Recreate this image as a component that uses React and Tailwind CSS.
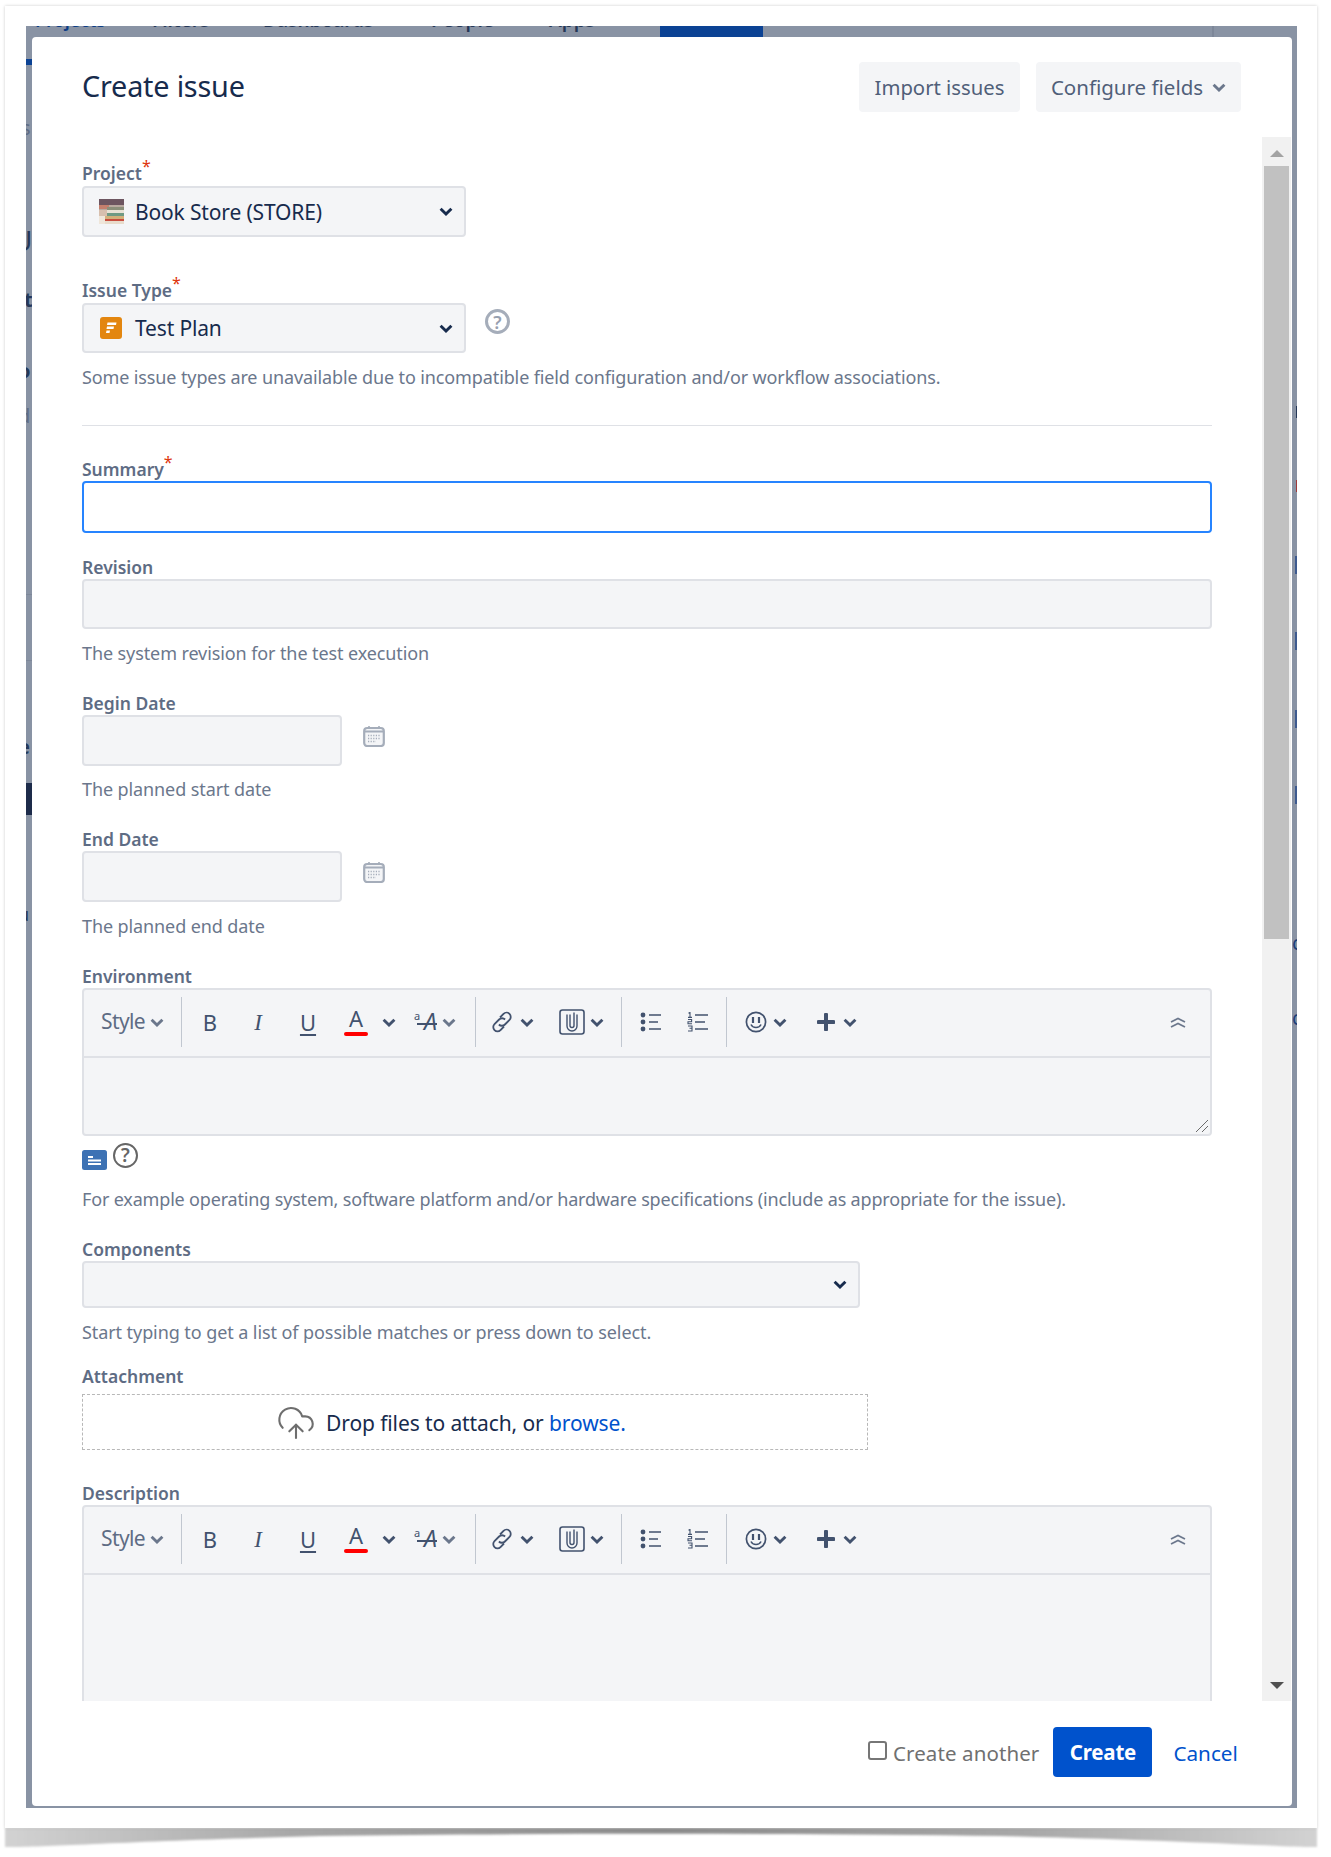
import React from "react";
import { CloudUpload } from "lucide-react";

const FONT = "font-['Noto_Sans','Open_Sans',sans-serif]";

function Chevron({ className = "text-[#6b778c]", w = 14 }) {
  return (
    <svg width={w} height="9" viewBox="0 0 12 8" className={className} fill="none">
      <path d="M1.2 1.5 6 6.2l4.8-4.7" stroke="currentColor" strokeWidth="2.6" />
    </svg>
  );
}

function Label({ children, required, className = "" }) {
  return (
    <div className={`h-[24px] leading-[24px] text-[17.5px] font-semibold text-[#5e6c84] relative ${className}`}>
      {children}
      {required && <span className="text-[#de350b] text-[16px] font-normal leading-none align-top relative top-[-3px]">*</span>}
    </div>
  );
}

function Hint({ children, className = "", tracking = "tracking-[-0.1px]" }) {
  return <div className={`h-[24px] leading-[24px] text-[18px] text-[#6b778c] ${tracking} ${className}`}>{children}</div>;
}

function BookIcon() {
  return (
    <svg width="25" height="25" viewBox="0 0 25 25" className="shrink-0">
      <rect width="25" height="25" fill="#b9a9a0" />
      <rect width="25" height="6" fill="#6d5560" />
      <rect x="0" y="6" width="10" height="4" fill="#c57f6d" />
      <rect x="8" y="8" width="17" height="3" fill="#8b8f7a" />
      <rect x="8" y="11" width="17" height="3" fill="#e8e2d5" />
      <rect x="0" y="11" width="8" height="6" fill="#d7bfae" />
      <rect x="8" y="14" width="17" height="3" fill="#6f9a83" />
      <rect x="6" y="17" width="19" height="3" fill="#d3b07a" />
      <rect x="0" y="17" width="6" height="8" fill="#efe6da" />
      <rect x="6" y="20" width="19" height="2" fill="#c84d3e" />
      <rect x="6" y="22" width="19" height="3" fill="#e8dccc" />
    </svg>
  );
}

function PlanIcon() {
  return (
    <svg width="22" height="22" viewBox="0 0 22 22" className="shrink-0">
      <rect width="22" height="22" rx="3" fill="#e3860f" />
      <path d="M7.5 5.5h9l-.5 2.4H7zM7 9.5h7l-.5 2.4H6.5zM6.5 13.5H10l-.5 2.4H6z" fill="#fff" />
    </svg>
  );
}

function SelectBox({ icon, text, className = "" }) {
  return (
    <div className={`bg-[#f4f5f7] border-2 border-[#dfe1e6] rounded-[4px] flex items-center ${className}`}>
      {icon && <div className="w-[51px] pl-[15px] shrink-0 flex items-center">{icon}</div>}
      {text && <span className="text-[21px] text-[#172b4d] tracking-[-0.15px] relative top-[1px]">{text}</span>}
      <Chevron className="ml-auto mr-[11px] text-[#172b4d]" />
    </div>
  );
}

function InputBox({ className = "" }) {
  return <div className={`bg-[#f4f5f7] border-2 border-[#dfe1e6] rounded-[4px] ${className}`} />;
}

function CalendarIcon() {
  return (
    <svg width="22" height="22" viewBox="0 0 22 22" className="text-[#a5adba]">
      <rect x="1.2" y="3" width="19.6" height="18" rx="3" fill="#f4f5f7" stroke="currentColor" strokeWidth="2.2" />
      <path d="M1 6.5h20" stroke="currentColor" strokeWidth="2" />
      <path d="M6 1v3M16 1v3" stroke="currentColor" strokeWidth="1.6" />
      <path d="M5 10.5h12M5 13.5h12M5 16.5h8" stroke="currentColor" strokeWidth="1.4" strokeDasharray="1.2 1.4" />
    </svg>
  );
}

function DateField({ label, hint, mtLabel, mtHint }) {
  return (
    <div className={mtLabel}>
      <Label>{label}</Label>
      <div className="flex">
        <InputBox className="w-[260px] h-[51px]" />
        <div className="ml-[21px] mt-[10px]"><CalendarIcon /></div>
      </div>
      <Hint className={mtHint}>{hint}</Hint>
    </div>
  );
}

function Sep({ className = "" }) {
  return <div className={`w-[1px] h-[50px] bg-[#c1c7d0] shrink-0 ${className}`} />;
}

function Toolbar() {
  return (
    <div className="h-[68px] pb-[2px] border-b-2 border-[#dfe1e6] flex items-center text-[#42526e] shrink-0">
      <span className="ml-[17px] w-[48px] text-[21px] text-[#5e6c84] tracking-[-0.6px]">Style</span>
      <Chevron className="ml-[1px] text-[#6b778c]" />
      <Sep className="ml-[17px]" />
      <span className="ml-[20px] w-[16px] text-center text-[22px] leading-none">B</span>
      <span className="ml-[32px] w-[16px] text-center text-[23px] leading-none italic font-['Liberation_Serif',serif] underline-offset-0">I</span>
      <span className="ml-[33px] w-[18px] text-center text-[22px] leading-none underline underline-offset-[3px] decoration-[1.5px]">U</span>
      <div className="ml-[26px] w-[26px] flex flex-col items-center relative top-[-2px]">
        <span className="text-[22px] leading-[26px]">A</span>
        <div className="w-[24px] h-[4px] rounded-[2px] bg-[#ff0000] mt-[1px]" />
      </div>
      <Chevron className="ml-[13px]" />
      <div className="ml-[18px] w-[28px] relative h-[28px]">
        <span className="absolute left-0 top-[2px] text-[11px] leading-none">a</span>
        <span className="absolute left-[10px] top-[2px] text-[23px] leading-none italic">A</span>
        <div className="absolute left-[3px] top-[15px] w-[20px] h-[1.5px] bg-[#42526e]" />
      </div>
      <Chevron />
      <Sep className="ml-[19px]" />
      <svg width="26" height="26" viewBox="0 0 26 26" fill="none" stroke="currentColor" strokeWidth="1.8" className="ml-[13px]">
        <path d="M11 8.5l3.5-3.6a4.2 4.2 0 0 1 6 6l-4.6 4.6a4.2 4.2 0 0 1-6 0" />
        <path d="M15 17.5l-3.5 3.6a4.2 4.2 0 0 1-6-6l4.6-4.6a4.2 4.2 0 0 1 6 0" />
      </svg>
      <Chevron className="ml-[5px]" />
      <svg width="26" height="26" viewBox="0 0 26 26" fill="none" stroke="currentColor" className="ml-[25px]">
        <rect x="1" y="1" width="24" height="24" rx="2.5" strokeWidth="1.6" />
        <path d="M8 5.5v11.5a5 5 0 0 0 10 0V5.5" strokeWidth="1.4" />
        <path d="M11 5.5v11a2 2 0 0 0 4 0V3.5" strokeWidth="1.4" />
      </svg>
      <Chevron className="ml-[5px]" />
      <Sep className="ml-[17px]" />
      <svg width="22" height="20" viewBox="0 0 22 20" className="ml-[18px]">
        <circle cx="3" cy="3" r="2.4" fill="currentColor" /><circle cx="3" cy="10" r="2.4" fill="currentColor" /><circle cx="3" cy="17" r="2.4" fill="currentColor" />
        <path d="M9 3h12M9 10h9M9 17h12" stroke="currentColor" strokeWidth="1.7" />
      </svg>
      <svg width="22" height="20" viewBox="0 0 22 20" className="ml-[25px]">
        <path d="M1.5 1.2 3 .4v4.6M1 5.4h4M1 7.5h3.6v2.2H1v2.1h4M1 14h4v2.2H2.5M5 16.2v2.8H1" stroke="currentColor" strokeWidth="1.1" fill="none" />
        <path d="M8 3h13M8 10h10M8 17h13" stroke="currentColor" strokeWidth="1.7" />
      </svg>
      <Sep className="ml-[17px]" />
      <svg width="22" height="22" viewBox="0 0 22 22" fill="none" stroke="currentColor" className="ml-[18px]">
        <circle cx="11" cy="11" r="9.6" strokeWidth="1.7" />
        <path d="M8 6v6M14 6v6" strokeWidth="2.2" />
        <path d="M6 13.5c1 2.3 3 3 5 3s4-.7 5-3" strokeWidth="1.6" />
      </svg>
      <Chevron className="ml-[6px]" />
      <svg width="18" height="18" viewBox="0 0 18 18" className="ml-[30px]">
        <path d="M9 1.5v15M1.5 9h15" stroke="currentColor" strokeWidth="4" strokeLinecap="round" />
      </svg>
      <Chevron className="ml-[8px]" />
      <svg width="16" height="12" viewBox="0 0 16 12" fill="none" stroke="#6b778c" strokeWidth="1.8" className="ml-auto mr-[24px]">
        <path d="M1 6 8 2.5 15 6M1 11l7-3.5 7 3.5" />
      </svg>
    </div>
  );
}

function Shadow() {
  return (
    <svg width="1331" height="30" viewBox="0 0 1331 30" className="absolute left-0 top-[1827px]">
      <defs>
        <linearGradient id="sh" x1="0" x2="1" y1="0" y2="0">
          <stop offset="0" stopColor="#d2d2d2" />
          <stop offset="0.22" stopColor="#a8a8a8" />
          <stop offset="0.5" stopColor="#8b8b8b" />
          <stop offset="0.78" stopColor="#a8a8a8" />
          <stop offset="1" stopColor="#d2d2d2" />
        </linearGradient>
        <filter id="bl" x="-2%" y="-50%" width="104%" height="200%"><feGaussianBlur stdDeviation="1" /></filter>
      </defs>
      <path d="M5 1H1317V20C1300 21 1200 14 1000 9 800 6 520 6 320 9 130 14 30 21 5 20Z" fill="url(#sh)" filter="url(#bl)" />
    </svg>
  );
}

export default function App() {
  return (
    <div className={`relative w-[1331px] h-[1857px] bg-white overflow-hidden pl-[5px] pt-[6px] ${FONT}`}>
      <Shadow />
      <div className="relative w-[1312px] h-[1822px] bg-white pl-[21px] pt-[20px] shadow-[0_0_3px_rgba(0,0,0,0.2)]">
        {/* dimmed page behind the dialog */}
        <div className="relative w-[1271px] h-[1782px] bg-[#8993a4] pl-[6px] pt-[11px] overflow-hidden">
          <div className="absolute left-[9px] top-[-18px] flex text-[19px] leading-[24px] text-[#0c3d86] font-semibold">
            <span className="w-[117px] text-[18px]">Projects</span>
            <span className="w-[111px] text-[#253858]">Filters</span>
            <span className="w-[168px] text-[#253858]">Dashboards</span>
            <span className="w-[118px] text-[#253858]">People</span>
            <span className="text-[#253858]">Apps</span>
          </div>
          <div className="absolute left-[634px] top-0 w-[103px] h-[11px] bg-[#0b4294] overflow-hidden">
            <span className="absolute left-[19px] top-[-19px] text-[19px] leading-[24px] font-semibold text-[#8a9bb8]">Create</span>
          </div>
          <div className="absolute left-[1186px] top-0 w-[2px] h-[11px] bg-[#7d8799]" />
          {/* left edge */}
          <div className="absolute left-0 top-[33px] w-[6px] h-[6px] bg-[#0b4294]" />
          <div className="absolute left-0 top-[757px] w-[6px] h-[32px] bg-[#1d2b4a]" />
          <div className="absolute left-0 top-[568px] w-[6px] h-[1px] bg-[#7d8799]" />
          <div className="absolute left-0 top-[634px] w-[6px] h-[1px] bg-[#7d8799]" />
          <span className="absolute left-[-5px] top-[90px] text-[20px] leading-[24px] text-[#5e6c84]">s</span>
          <span className="absolute left-[-14px] top-[200px] text-[28px] leading-[28px] text-[#253858]">U</span>
          <span className="absolute left-[-2px] top-[262px] text-[20px] leading-[24px] font-bold text-[#253858]">t</span>
          <span className="absolute left-[-8px] top-[333px] text-[20px] leading-[24px] font-bold text-[#253858]">o</span>
          <span className="absolute left-[-8px] top-[378px] text-[20px] leading-[24px] text-[#5e6c84]">d</span>
          <span className="absolute left-[-8px] top-[709px] text-[20px] leading-[24px] font-bold text-[#253858]">e</span>
          <span className="absolute left-[-8px] top-[876px] text-[18px] leading-[24px] text-[#253858]">u</span>
          {/* right edge */}
          <div className="absolute right-0 top-[530px] w-[2px] h-[18px] bg-[#3d5a8f]" />
          <div className="absolute right-0 top-[606px] w-[2px] h-[18px] bg-[#3d5a8f]" />
          <div className="absolute right-0 top-[684px] w-[2px] h-[18px] bg-[#3d5a8f]" />
          <div className="absolute right-0 top-[760px] w-[2px] h-[18px] bg-[#3d5a8f]" />
          <div className="absolute right-0 top-[380px] w-[1px] h-[12px] bg-[#253858]" />
          <div className="absolute right-0 top-[454px] w-[1px] h-[12px] bg-[#a03a3a]" />
          <span className="absolute left-[1266px] top-[905px] text-[20px] leading-[24px] text-[#1d3f7a]">c</span>
          <span className="absolute left-[1266px] top-[980px] text-[20px] leading-[24px] text-[#1d3f7a]">c</span>

          {/* dialog */}
          <div className="relative w-[1260px] h-[1769px] bg-white rounded-[4px] flex flex-col overflow-hidden">
            <div className="h-[100px] shrink-0 flex items-start pl-[50px] pr-[51px]">
              <h1 className="mt-[34px] text-[28.8px] leading-[30px] text-[#172b4d] font-normal tracking-[-0.2px]">Create issue</h1>
              <div className="ml-auto mt-[25px] pt-[1px] h-[50px] w-[161px] flex items-center justify-center rounded-[4px] bg-[#f4f5f7] text-[20.3px] text-[#505f79]">Import issues</div>
              <div className="ml-[16px] mt-[25px] pt-[1px] h-[50px] w-[205px] flex items-center justify-center gap-[9px] rounded-[4px] bg-[#f4f5f7] text-[20.5px] text-[#505f79]">
                Configure fields <Chevron className="text-[#6b778c]" />
              </div>
            </div>

            <div className="flex-1 min-h-0 flex overflow-hidden">
              <div className="flex-1 min-w-0 pl-[50px] overflow-hidden">
                <div className="w-[1130px] pt-[25px]">
                  <Label required className="top-[-1px]">Project</Label>
                  <SelectBox className="w-[384px] h-[51px]" icon={<BookIcon />} text="Book Store (STORE)" />

                  <Label required className="mt-[42px] top-[-1px]">Issue Type</Label>
                  <div className="flex">
                    <SelectBox className="w-[384px] h-[50px]" icon={<div className="pl-[1px]"><PlanIcon /></div>} text="Test Plan" />
                    <div className="ml-[19px] mt-[6px] w-[25px] h-[25px] rounded-full border-[3px] border-[#a5adba] flex items-center justify-center text-[18px] font-semibold text-[#97a0af] leading-none">?</div>
                  </div>
                  <Hint className="mt-[12px]" tracking="tracking-[-0.12px]">Some issue types are unavailable due to incompatible field configuration and/or workflow associations.</Hint>
                  <div className="h-[1px] bg-[#dfe1e6] mt-[36px]" />

                  <Label required className="mt-[31px]">Summary</Label>
                  <div className="h-[52px] border-2 border-[#2684ff] rounded-[4px] bg-white" />

                  <Label className="mt-[22px]">Revision</Label>
                  <InputBox className="h-[50px]" />
                  <Hint className="mt-[12px]">The system revision for the test execution</Hint>

                  <DateField label="Begin Date" hint="The planned start date" mtLabel="mt-[26px]" mtHint="mt-[11px]" />
                  <DateField label="End Date" hint="The planned end date" mtLabel="mt-[26px]" mtHint="mt-[12px]" />

                  <Label className="mt-[26px]">Environment</Label>
                  <div className="relative h-[148px] bg-[#f4f5f7] border-2 border-[#dfe1e6] rounded-[4px] overflow-hidden">
                    <Toolbar />
                    <svg width="14" height="14" viewBox="0 0 14 14" className="absolute right-[1px] bottom-[1px]" stroke="#6b6b6b" strokeWidth="1">
                      <path d="M1 13 13 1M7 13l6-6" />
                    </svg>
                  </div>
                  <div className="flex mt-[7px] h-[27px]">
                    <svg width="25" height="20" viewBox="0 0 25 20" className="mt-[7px]">
                      <rect width="25" height="20" rx="2.5" fill="#3d72b4" />
                      <path d="M6 7h5M6 10.5h13M6 14h13" stroke="#fff" strokeWidth="1.8" />
                    </svg>
                    <div className="ml-[6px] w-[25px] h-[25px] rounded-full border-[2.5px] border-[#666] flex items-center justify-center text-[19px] font-semibold text-[#666] leading-none">?</div>
                  </div>
                  <Hint className="mt-[17px]" tracking="tracking-[-0.17px]">For example operating system, software platform and/or hardware specifications (include as appropriate for the issue).</Hint>

                  <Label className="mt-[26px]">Components</Label>
                  <SelectBox className="w-[778px] h-[47px]" />
                  <Hint className="mt-[12px]" tracking="tracking-[-0.08px]">Start typing to get a list of possible matches or press down to select.</Hint>

                  <Label className="mt-[20px]">Attachment</Label>
                  <div className="mt-[6px] w-[786px] h-[56px] border border-dashed border-[#b8b8b8] flex items-center">
                    <CloudUpload size={40} strokeWidth={1.25} className="ml-[193px] text-[#6e6e6e] relative top-[1px]" />
                    <span className="ml-[10px] text-[21px] text-[#172b4d] tracking-[-0.1px] relative top-[2px]">
                      Drop files to attach, or <span className="text-[#0052cc]">browse.</span>
                    </span>
                  </div>

                  <Label className="mt-[31px]">Description</Label>
                  <div className="relative h-[300px] bg-[#f4f5f7] border-2 border-[#dfe1e6] rounded-[4px] overflow-hidden">
                    <Toolbar />
                  </div>
                </div>
              </div>

              {/* scrollbar */}
              <div className="w-[29px] mr-[1px] bg-[#f1f1f1] shrink-0 flex flex-col items-center">
                <div className="h-[29px] w-full flex items-center justify-center">
                  <div className="w-0 h-0 border-x-[7px] border-x-transparent border-b-[7px] border-b-[#a3a3a3] mt-[3px]" />
                </div>
                <div className="w-[25px] h-[773px] bg-[#c1c1c1]" />
                <div className="mt-auto h-[32px] w-full flex items-start justify-center">
                  <div className="w-0 h-0 border-x-[7px] border-x-transparent border-t-[7px] border-t-[#505050] mt-[13px]" />
                </div>
              </div>
            </div>

            <div className="h-[105px] shrink-0 flex items-start">
              <div className="ml-[836px] mt-[40px] w-[19px] h-[19px] border-2 border-[#767676] rounded-[3px] bg-white" />
              <span className="ml-[6px] mt-[38px] text-[20.5px] leading-[28px] text-[#707070] tracking-[0.1px]">Create another</span>
              <div className="ml-[14px] mt-[26px] pt-[1px] w-[99px] h-[50px] rounded-[4px] bg-[#0052cc] flex items-center justify-center text-[20.5px] font-bold text-white tracking-[-0.2px]">Create</div>
              <span className="ml-[21px] mt-[38px] text-[20.7px] leading-[28px] text-[#0052cc]">Cancel</span>
            </div>
          </div>
        </div>
      </div>
    </div>
  );
}
